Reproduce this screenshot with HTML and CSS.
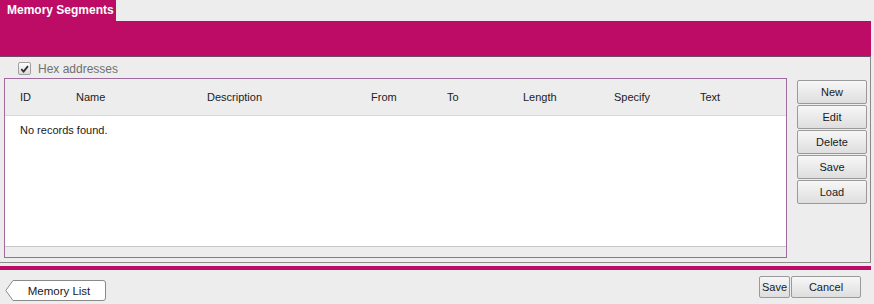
FILE: index.html
```html
<!doctype html>
<html lang="en">

<head>
    <meta charset="utf-8">
    <title>Memory Segments</title>
    <link rel="stylesheet" href="styles.css">
</head>

<body>
    <div class="tabs">
        <div class="tab">Memory Segments</div>
    </div>
    <div class="banner"></div>

    <div class="panel">
        <div class="main">
            <label class="hex">
                <span class="check">
                    <svg width="12" height="12" viewBox="0 0 12 12">
                        <path d="M2.5 6.2 L5 8.8 L9.8 2.8" fill="none" stroke="#333" stroke-width="2"/>
                    </svg>
                </span>
                Hex addresses
            </label>

            <div class="grid">
                <div class="grid_head">
                    <span class="c_id">ID</span>
                    <span class="c_name">Name</span>
                    <span class="c_desc">Description</span>
                    <span class="c_from">From</span>
                    <span class="c_to">To</span>
                    <span class="c_len">Length</span>
                    <span class="c_spec">Specify</span>
                    <span class="c_text">Text</span>
                </div>
                <div class="grid_body">
                    <div class="empty">No records found.</div>
                </div>
                <div class="grid_scroll"></div>
            </div>
        </div>

        <div class="side">
            <button class="btn">New</button>
            <button class="btn">Edit</button>
            <button class="btn">Delete</button>
            <button class="btn">Save</button>
            <button class="btn">Load</button>
        </div>
    </div>

    <div class="stripe"></div>

    <div class="footer">
        <button class="back">
            <svg class="back_shape" width="102" height="21" viewBox="0 0 102 21">
                <path d="M8 0.5 L98 0.5 Q100.5 0.5 100.5 3 L100.5 18 Q100.5 20.5 98 20.5 L8 20.5 L0.8 10.5 Z"
                      fill="#fff" stroke="#8a8a8a" stroke-width="1"/>
            </svg>
            <span class="back_text">Memory List</span>
        </button>
        <div class="actions">
            <button class="btn small">Save</button>
            <button class="btn wide">Cancel</button>
        </div>
    </div>
</body>

</html>
```

FILE: styles.css
```css
body {
    margin: 0;
    background-color: #ededed;
    font-family: "Liberation Sans", Arial, sans-serif;
    font-size: 11px;
    color: #1a1a1a;
    width: 874px;
    height: 304px;
    overflow: hidden;
}

.tabs {
    height: 21px;
    display: flex;
}

.tab {
    background-color: #bc0c65;
    color: white;
    font-weight: bold;
    font-size: 12px;
    width: 116px;
    padding-left: 7px;
    box-sizing: border-box;
    line-height: 21px;
}

.banner {
    background-color: #bc0c65;
    height: 35px;
    width: 871px;
}

.panel {
    width: 871px;
    height: 207px;
    box-sizing: border-box;
    border-top: 1px solid #6e4a6e;
    border-right: 1px solid #8a8a8a;
    border-bottom: 1px solid #8a8a8a;
    display: flex;
}

.main {
    width: 783px;
    padding-left: 4px;
}

.hex {
    display: flex;
    align-items: center;
    height: 19px;
    padding-top: 2px;
    padding-left: 14px;
    gap: 7px;
    font-size: 12px;
    color: #707070;
}

.check {
    width: 11px;
    height: 11px;
    border: 1px solid #a0a0a0;
    border-radius: 2px;
    background: linear-gradient(#fdfdfd, #dcdcdc);
    display: flex;
}

.grid {
    width: 783px;
    height: 180px;
    box-sizing: border-box;
    border: 1px solid #9d6c9d;
    display: flex;
    flex-direction: column;
}

.grid_head {
    height: 36px;
    border-bottom: 1px solid #d8d8d8;
    background-color: #ededed;
    position: relative;
    color: #222;
}

.grid_head span {
    position: absolute;
    top: 12px;
}

.c_id { left: 15px; }
.c_name { left: 71px; }
.c_desc { left: 202px; }
.c_from { left: 366px; }
.c_to { left: 442px; }
.c_len { left: 518px; }
.c_spec { left: 609px; }
.c_text { left: 695px; }

.grid_body {
    flex: 1;
    background-color: white;
    border-bottom: 1px solid #c8c8c8;
}

.empty {
    padding: 8px 0 0 15px;
}

.grid_scroll {
    height: 10px;
    background-color: #ededed;
}

.side {
    padding-top: 23px;
    padding-left: 10px;
    display: flex;
    flex-direction: column;
    gap: 1px;
}

.btn {
    width: 70px;
    height: 24px;
    font-family: "Liberation Sans", Arial, sans-serif;
    font-size: 11px;
    color: #1a1a1a;
    border: 1px solid #9a9a9a;
    border-radius: 2px;
    background: linear-gradient(#f7f7f7, #dedede);
    padding: 0;
}

.stripe {
    margin-top: 3px;
    height: 4px;
    width: 871px;
    background-color: #bc0c65;
}

.footer {
    display: flex;
    justify-content: space-between;
    width: 861px;
    padding-top: 6px;
}

.back {
    position: relative;
    width: 102px;
    height: 21px;
    margin-top: 4px;
    margin-left: 5px;
    border: none;
    background: none;
    padding: 0;
    font-family: "Liberation Sans", Arial, sans-serif;
    font-size: 11.5px;
    color: #1a1a1a;
}

.back_shape {
    position: absolute;
    left: 0;
    top: 0;
}

.back_text {
    position: relative;
    padding-left: 6px;
}

.actions {
    display: flex;
    gap: 1px;
}

.btn.small {
    width: 31px;
    height: 22px;
}

.btn.wide {
    width: 70px;
    height: 22px;
}
```
